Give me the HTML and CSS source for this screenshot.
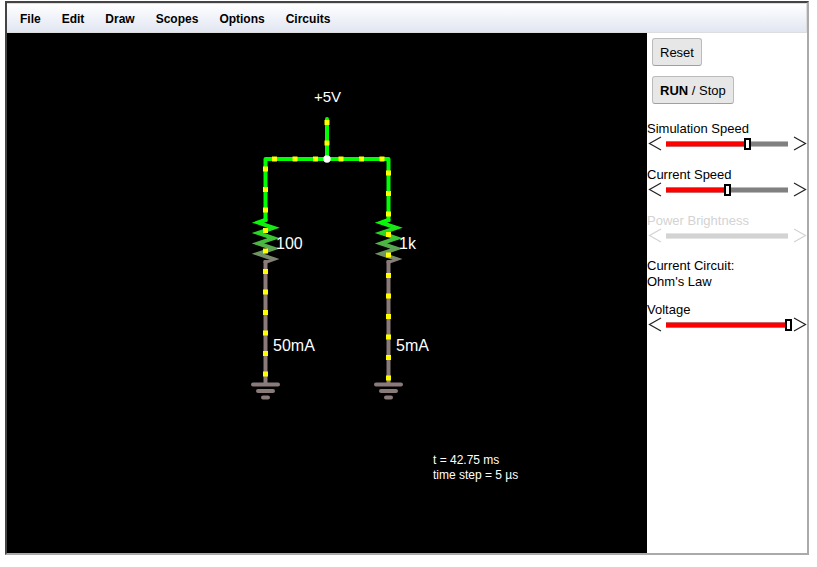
FILE: index.html
```html
<!DOCTYPE html>
<html lang="en">
<head>
<meta charset="utf-8">
<title>Circuit Simulator</title>
<link rel="stylesheet" href="styles.css">
</head>
<body>
<div class="app">
  <nav class="menubar">
    <button type="button">File</button>
    <button type="button">Edit</button>
    <button type="button">Draw</button>
    <button type="button">Scopes</button>
    <button type="button">Options</button>
    <button type="button">Circuits</button>
  </nav>
  <div class="workspace">
    <main class="board">
      <svg class="circuit" viewBox="0 0 640 520" role="img" aria-label="Ohm's Law circuit">
        <defs>
          <linearGradient id="drop" gradientUnits="userSpaceOnUse" x1="0" y1="187" x2="0" y2="229">
            <stop offset="0" stop-color="#00ff00"/>
            <stop offset="1" stop-color="#8a7a7a"/>
          </linearGradient>
        </defs>
        <path class="wire live" d="M320 86V126M258.500 126H381.500M258.500 126V187M381.500 126V187"/>
        <path class="wire dead" d="M258.500 229V351M381.500 229V351"/>
        <path class="resistor" d="M258.500 186V187L251 189.600L266.500 194.800L251 200L266.500 205.200L251 210.400L266.500 215.600L251 220.800L266.500 226L258.500 229V230"/>
        <path class="resistor" d="M381.500 186V187L374 189.600L389.500 194.800L374 200L389.500 205.200L374 210.400L389.500 215.600L374 220.800L389.500 226L381.500 229V230"/>
        <path class="wire dead" d="M246 351.500H271M251 358H266M256 364.500H261M369 351.500H394M374 358H389M379 364.500H384"/>
        <path class="charge" d="M320 87V126M265 126H320M331.500 126H380M258.500 133.500V346M381.500 137.500V350"/>
        <circle cx="320" cy="126" r="3.700" fill="#fff"/>
        <text class="terminal" x="307" y="69">+5V</text>
        <text class="value" x="269" y="216">100</text>
        <text class="value" x="392" y="216">1k</text>
        <text class="value" x="266" y="318">50mA</text>
        <text class="value" x="389" y="318">5mA</text>
        <text class="status" x="426" y="431">t = 42.75 ms</text>
        <text class="status" x="426" y="446">time step = 5 µs</text>
      </svg>
    </main>
    <aside class="panel">
      <button type="button" class="action">Reset</button>
      <button type="button" class="action"><strong>RUN</strong> / Stop</button>
      <div class="controls">
        <div class="control">
          <label for="sim">Simulation Speed</label>
          <div class="slider">
            <button type="button" aria-label="Slower"><svg viewBox="0 0 16 15"><path d="M13 1L1.500 7.500L13 14"/></svg></button>
            <input id="sim" type="range" min="0" max="100" value="66" style="--part:.66">
            <button type="button" aria-label="Faster"><svg viewBox="0 0 16 15"><path d="M2 1L13.500 7.500L2 14"/></svg></button>
          </div>
        </div>
        <div class="control">
          <label for="cur">Current Speed</label>
          <div class="slider">
            <button type="button" aria-label="Slower"><svg viewBox="0 0 16 15"><path d="M13 1L1.500 7.500L13 14"/></svg></button>
            <input id="cur" type="range" min="0" max="100" value="50" style="--part:.5">
            <button type="button" aria-label="Faster"><svg viewBox="0 0 16 15"><path d="M2 1L13.500 7.500L2 14"/></svg></button>
          </div>
        </div>
        <div class="control disabled">
          <label for="pow">Power Brightness</label>
          <div class="slider">
            <button type="button" disabled aria-label="Dimmer"><svg viewBox="0 0 16 15"><path d="M13 1L1.500 7.500L13 14"/></svg></button>
            <input id="pow" type="range" min="0" max="100" value="50" disabled style="--part:.5">
            <button type="button" disabled aria-label="Brighter"><svg viewBox="0 0 16 15"><path d="M2 1L13.500 7.500L2 14"/></svg></button>
          </div>
        </div>
        <p class="info">Current Circuit:<br>Ohm's Law</p>
        <div class="control">
          <label for="volt">Voltage</label>
          <div class="slider">
            <button type="button" aria-label="Lower"><svg viewBox="0 0 16 15"><path d="M13 1L1.500 7.500L13 14"/></svg></button>
            <input id="volt" type="range" min="0" max="100" value="100" style="--part:1">
            <button type="button" aria-label="Higher"><svg viewBox="0 0 16 15"><path d="M2 1L13.500 7.500L2 14"/></svg></button>
          </div>
        </div>
      </div>
    </aside>
  </div>
</div>
</body>
</html>
```
FILE: styles.css
```css
* { box-sizing: border-box; }

body {
  margin: 0;
  padding: 1px 8px 12px 5px;
  min-height: 100vh;
  display: flex;
  background: #fff;
  color: #000;
  font: 13px/15px "Liberation Sans", Arial, sans-serif;
}

button {
  font: inherit;
  color: inherit;
  cursor: pointer;
}

.app {
  flex: 1;
  min-width: 0;
  display: flex;
  flex-direction: column;
  border: 2px solid;
  border-color: #444 #aaa #aaa #444;
}

.menubar {
  display: flex;
  align-items: center;
  gap: 21px;
  height: 30px;
  padding: 2px 13px 0;
  border: 1px solid #ddd;
  border-left: 0;
  background: linear-gradient(#fff, #e1e6f2);
}

.menubar button {
  padding: 0;
  border: 0;
  background: none;
  font-size: 12px;
  font-weight: bold;
}

.workspace {
  flex: 1;
  min-height: 0;
  display: flex;
}

.board {
  flex: 1;
  min-width: 0;
  display: flex;
  background: #000;
}

.circuit {
  display: block;
  width: 100%;
}

.wire {
  fill: none;
  stroke-width: 4;
  stroke-linecap: round;
}

.live { stroke: #0f0; }
.dead { stroke: #8a7a7a; }

.resistor {
  fill: none;
  stroke: url(#drop);
  stroke-width: 4;
  stroke-miterlimit: 10;
}

.charge {
  fill: none;
  stroke: #ff0;
  stroke-width: 5;
  stroke-dasharray: 5 15.5;
}

.value {
  fill: #fff;
  font-size: 16px;
}

.terminal {
  fill: #fff;
  font-size: 15px;
}

.status {
  fill: #fff;
  font-size: 12px;
}

.panel {
  flex: 0 0 160px;
  display: flex;
  flex-direction: column;
  align-items: flex-start;
  gap: 10px;
  padding-top: 5px;
  background: #fff;
}

.action {
  height: 28px;
  margin-left: 5px;
  padding: 0 7px;
  border: 1px solid #bbb;
  border-bottom-color: #a0a0a0;
  border-radius: 3px;
  background: #e7e7e7;
}

.controls {
  align-self: stretch;
  margin-top: 7px;
}

.control + .control { margin-top: 16px; }

.control label {
  display: block;
}

.slider {
  display: flex;
  height: 15px;
}

.slider button {
  flex: none;
  width: 16px;
  padding: 0;
  border: 0;
  background: none;
  line-height: 0;
}

.slider button:last-child { width: 15px; }

.slider svg {
  width: 16px;
  height: 15px;
  margin-right: -1px;
  fill: none;
  stroke: #222;
  stroke-width: 1.2;
}

.slider input {
  appearance: none;
  flex: 1;
  min-width: 0;
  height: 15px;
  margin: 0;
  background: none;
}

.slider input::-webkit-slider-runnable-track {
  height: 12px;
  background:
    linear-gradient(#c66 1px, #f00 1px 5px, #c66 5px) 3px 3px / calc((100% - 7px) * var(--part)) 6px no-repeat,
    linear-gradient(#bbb 1px, #808080 1px 5px, #bbb 5px) 3px 3px / calc(100% - 7px) 6px no-repeat;
}

.slider input::-webkit-slider-thumb {
  appearance: none;
  width: 7px;
  height: 12px;
  border: 2px solid #000;
  background: #fff;
}

.slider input:disabled::-webkit-slider-runnable-track {
  background: linear-gradient(#e4e4e4 1px, #d3d3d3 1px 5px, #e4e4e4 5px) 3px 3px / calc(100% - 7px) 6px no-repeat;
}

.slider input:disabled::-webkit-slider-thumb { visibility: hidden; }

.disabled { color: #d3d3d3; }
.disabled .slider svg { stroke: #d3d3d3; }

.info {
  margin: 15px 0 12px;
  line-height: 16px;
}
```
